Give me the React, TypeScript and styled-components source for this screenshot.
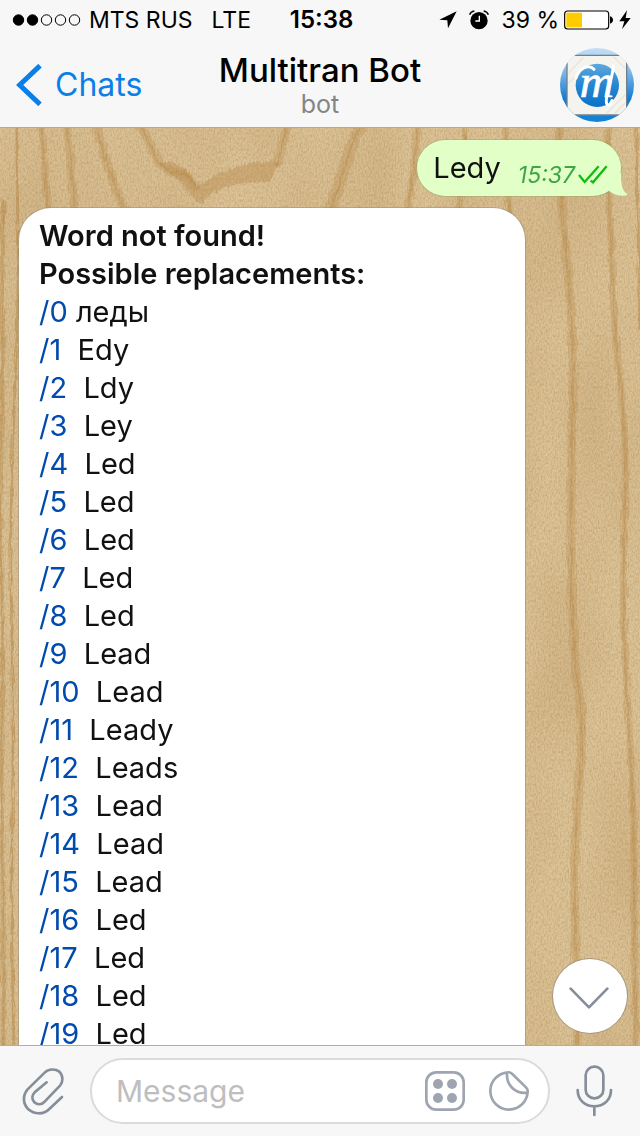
import React from "react";
import styled, { createGlobalStyle } from "styled-components";

const GlobalStyle = createGlobalStyle`
  *, *::before, *::after { box-sizing: border-box; }
  body {
    margin: 0;
    background: #f7f7f7;
    color: #111;
    font-family: Inter, "Liberation Sans", sans-serif;
  }
  button, input { font: inherit; color: inherit; }
`;

const Screen = styled.div`
  display: flex;
  flex-direction: column;
  height: 100vh;
  overflow: hidden;
`;

const Header = styled.header`
  flex: none;
  background: #f7f7f7;
  border-bottom: 1px solid #a9abad;
  color: #000;
`;

const StatusBar = styled.div`
  display: grid;
  grid-template-columns: 1fr auto 1fr;
  align-items: center;
  height: 40px;
  padding: 0 9px 0 12px;
  font-size: 23px;
  line-height: 28px;
  white-space: nowrap;
`;

const StatusGroup = styled.div<{ $end?: boolean; $gap: number }>`
  display: flex;
  align-items: center;
  justify-content: ${(p) => (p.$end ? "flex-end" : "flex-start")};
  gap: ${(p) => p.$gap}px;
`;

const Carrier = styled.span`
  margin-right: 12px;
`;

const Clock = styled.time`
  font-size: 24px;
  font-weight: 600;
`;

const NavBar = styled.div`
  display: grid;
  grid-template-columns: 1fr auto 1fr;
  align-items: center;
  height: 87px;
  padding: 2px 6px 0;
`;

const BackLink = styled.a`
  display: flex;
  align-items: center;
  gap: 12px;
  padding-left: 10px;
  color: #0b7fe8;
  font-size: 32px;
  line-height: 40px;
  text-decoration: none;
`;

const Heading = styled.div`
  text-align: center;
`;

const Title = styled.h1`
  margin: 0;
  font-size: 33px;
  line-height: 38px;
  font-weight: 500;
`;

const Subtitle = styled.p`
  margin: 0;
  color: #848486;
  font-size: 25px;
  line-height: 30px;
`;

const AvatarButton = styled.button`
  justify-self: end;
  display: block;
  padding: 0;
  border: 0;
  border-radius: 50%;
  background: none;
  svg { display: block; }
`;

const Chat = styled.main`
  position: relative;
  flex: 1;
  min-height: 0;
  overflow: hidden;
  isolation: isolate;
  display: flex;
  flex-direction: column;
  gap: 12px;
  padding: 12px 19px 0;
  background: #d5ba8b;
`;

const Wallpaper = styled.svg`
  position: absolute;
  inset: 0;
  width: 100%;
  height: 100%;
  z-index: -1;
`;

const OutgoingBubble = styled.article`
  position: relative;
  align-self: flex-end;
  flex: none;
  display: flex;
  align-items: center;
  gap: 17px;
  height: 56px;
  padding: 0 13px 0 16px;
  border-radius: 28px;
  background: #e1ffc7;
  box-shadow: 0 0 0 1px rgba(120, 160, 80, 0.3);
  font-size: 29px;
  line-height: 38px;
`;

const Tail = styled.svg`
  position: absolute;
  right: -7px;
  bottom: 0;
`;

const Meta = styled.span`
  display: flex;
  align-items: center;
  gap: 3px;
  padding-top: 13px;
  color: #3fa546;
  font-size: 23px;
  line-height: 28px;
  font-style: italic;
`;

const IncomingBubble = styled.article`
  flex: none;
  margin-right: 96px;
  padding: 9px 20px 60px;
  border-radius: 32px;
  background: #fff;
  box-shadow: 0 0 0 1px rgba(134, 130, 120, 0.4);
  font-size: 29px;
  line-height: 38px;
`;

const Notice = styled.p`
  margin: 0;
  font-weight: 600;
`;

const Suggestions = styled.ul`
  margin: 0;
  padding: 0;
  list-style: none;
`;

const Suggestion = styled.li`
  white-space: pre;
`;

const Command = styled.a`
  color: #004bad;
  text-decoration: none;
`;

const ScrollButton = styled.button`
  position: absolute;
  right: 13px;
  bottom: 12px;
  display: grid;
  place-items: center;
  width: 74px;
  height: 74px;
  padding: 3px 2px 0 0;
  border: 0;
  border-radius: 50%;
  background: #fff;
  box-shadow: 0 0 0 1px rgba(134, 130, 120, 0.6);
`;

const Composer = styled.form`
  flex: none;
  display: flex;
  align-items: center;
  gap: 26px;
  height: 91px;
  padding: 0 27px 0 22px;
  border-top: 1px solid #acaeb0;
  background: #f7f7f7;
`;

const Field = styled.div`
  flex: 1;
  min-width: 0;
  display: flex;
  align-items: center;
  gap: 24px;
  height: 66px;
  padding: 0 19px 0 24px;
  border: 2px solid #dadbdd;
  border-radius: 33px;
  background: #fff;
`;

const MessageInput = styled.input`
  flex: 1;
  min-width: 0;
  height: 44px;
  padding: 0;
  border: 0;
  outline: 0;
  background: none;
  font-size: 30px;
  &::placeholder { color: #bebec0; opacity: 1; }
`;

const IconButton = styled.button`
  flex: none;
  display: block;
  padding: 0;
  border: 0;
  background: none;
  color: #858e99;
  svg { display: block; }
`;

const strokeProps = {
  fill: "none",
  stroke: "currentColor",
  strokeWidth: 8,
  strokeLinecap: "round" as const,
  strokeLinejoin: "round" as const,
};

const SignalDots = () => (
  <svg width="70" height="14" viewBox="0 0 70 14" aria-hidden="true">
    {[7, 21, 35, 49, 63].map((cx, i) => (
      <circle key={cx} cx={cx - 0.5} cy="7" r="5.2" fill={i < 2 ? "#000" : "none"} stroke="#000" strokeWidth="1" />
    ))}
  </svg>
);

const LocationIcon = () => (
  <svg width="18" height="18" viewBox="361 36 54 54" aria-hidden="true">
    <path d="M414 37 362 62 386 64 388 88Z" />
  </svg>
);

const AlarmIcon = () => (
  <svg width="20" height="20" viewBox="451 31 60 60" aria-hidden="true">
    <circle cx="481" cy="63" r="26" />
    <path d="M453 45Q456 36 467 34M509 45Q506 36 495 34" fill="none" stroke="#000" strokeWidth="4" />
    <path d="M482 48V64H470" fill="none" stroke="#fff" strokeWidth="4" />
  </svg>
);

const BatteryIcon = () => (
  <svg width="50" height="20" viewBox="732 32 150 60" aria-hidden="true">
    <rect x="734" y="35" width="132" height="54" rx="9" fill="#fff" stroke="#000" strokeWidth="3.5" />
    <rect x="739" y="40" width="47" height="44" fill="#fc0" />
    <path d="M870 51Q879 54 879 62T870 73Z" />
  </svg>
);

const BoltIcon = () => (
  <svg width="12" height="20" viewBox="895 30 36 60" aria-hidden="true">
    <path d="M919 31 896 64H911L904 88 930 54H915Z" />
  </svg>
);

const BackIcon = () => (
  <svg width="27" height="42" viewBox="49 189 81 126" aria-hidden="true">
    <path d="M121 194 60 252 121 310" fill="none" stroke="currentColor" strokeWidth="15" />
  </svg>
);

const Avatar = () => (
  <svg width="74" height="74" viewBox="720 144 222 222" aria-hidden="true">
    <defs>
      <linearGradient id="sky" x1="0" y1="0" x2="0" y2="1">
        <stop offset="0" stopColor="#c4def5" />
        <stop offset="0.2" stopColor="#a3caec" />
        <stop offset="0.5" stopColor="#4a9add" />
        <stop offset="0.7" stopColor="#0d7bd0" />
        <stop offset="1" stopColor="#1683d6" />
      </linearGradient>
      <linearGradient id="disc" x1="0" y1="0" x2="0" y2="1">
        <stop offset="0" stopColor="#5fa8e0" />
        <stop offset="0.5" stopColor="#2586d0" />
        <stop offset="1" stopColor="#0873c8" />
      </linearGradient>
      <clipPath id="round"><circle cx="831" cy="255" r="111" /></clipPath>
    </defs>
    <g clipPath="url(#round)">
      <rect x="720" y="144" width="222" height="222" fill="url(#sky)" />
      <rect x="741" y="166" width="179" height="179" rx="10" fill="#f5f3ee" stroke="#6f8190" strokeWidth="4" />
      <path d="M745 220 790 172M745 250 765 230M860 340 915 285M885 340 915 310M880 170 916 205" stroke="#e9e4da" strokeWidth="4" />
      <circle cx="832" cy="256" r="65" fill="url(#disc)" />
      <text x="779" y="292" fontFamily="Liberation Serif, serif" fontStyle="italic" fontSize="142" fill="#fff" stroke="#fff" strokeWidth="2">m</text>
      <path d="M768 234C776 206 806 190 822 208M880 198C878 240 852 288 860 311Q868 322 876 302" fill="none" stroke="#fff" strokeWidth="9" strokeLinecap="round" />
    </g>
  </svg>
);

const ReadChecks = () => (
  <svg width="30" height="20" viewBox="535 121 90 60" fill="none" stroke="#12bd12" strokeWidth="7" aria-hidden="true">
    <path d="M538 151 555 172 597 125M573 168 580 173 621 125" />
  </svg>
);

const BubbleTail = () => (
  <Tail width="24" height="24" viewBox="0 0 24 24" aria-hidden="true">
    <path d="M17 0C17 10 17 18 24 23C15 25 9 22 4 18Z" fill="#e1ffc7" />
  </Tail>
);

const grain = [
  { d: "M17 120C16 170 20 240 17 330S8 520 12 640S8 820 14 1050", w: 3 },
  { d: "M40 120C45 150 44 180 50 220", w: 7 },
  { d: "M66 120C72 160 70 180 77 220", w: 8 },
  { d: "M94 120C104 150 109 180 131 222", w: 9 },
  { d: "M134 120C150 134 151 154 162 166S184 164 198 190", w: 9 },
  { d: "M290 120C281 137 283 154 276 166", w: 9 },
  { d: "M364 120C346 150 344 180 326 220", w: 12 },
  { d: "M418 120C417 155 412 180 406 220", w: 8 },
  { d: "M465 120C464 155 462 180 458 220", w: 5 },
  { d: "M505 120C509 155 506 180 510 220", w: 6 },
  { d: "M560 120C557 170 561 195 565 240S573 320 573 370S569 530 572 600S574 660 580 700S577 780 575 850S578 980 577 1050", w: 9 },
  { d: "M609 120C606 170 611 220 613 290S624 390 625 450S622 560 624 630S629 720 632 780S633 880 636 1050", w: 7 },
  { d: "M637 120C635 180 640 240 640 330", w: 4 },
  { d: "M4 200C0 260 5 350 1 440S5 600 2 720S6 900 3 1050", w: 5 },
];

const WoodWallpaper = () => (
  <Wallpaper viewBox="0 128 640 917" preserveAspectRatio="xMidYMin slice" aria-hidden="true">
    <defs>
      <filter id="speckle" x="0" y="0" width="100%" height="100%" colorInterpolationFilters="sRGB">
        <feTurbulence type="fractalNoise" baseFrequency="0.63 0.37" numOctaves="2" seed="4" />
        <feColorMatrix values="0 0 0 0 0.62  0 0 0 0 0.47  0 0 0 0 0.26  1.4 0 0 0 -0.5" />
      </filter>
      <filter id="clouds" x="0" y="0" width="100%" height="100%" colorInterpolationFilters="sRGB">
        <feTurbulence type="fractalNoise" baseFrequency="0.015 0.006" numOctaves="2" seed="9" />
        <feColorMatrix values="0 0 0 0 0.7  0 0 0 0 0.54  0 0 0 0 0.34  1.4 0 0 0 -0.5" />
      </filter>
      <filter id="fibre" filterUnits="userSpaceOnUse" x="0" y="110" width="640" height="950" colorInterpolationFilters="sRGB">
        <feTurbulence type="fractalNoise" baseFrequency="0.5 0.06" numOctaves="2" seed="2" result="n" />
        <feDisplacementMap in="SourceGraphic" in2="n" scale="6" xChannelSelector="R" yChannelSelector="G" />
      </filter>
    </defs>
    <rect y="128" width="640" height="917" fill="#dcc498" />
    <rect y="128" width="640" height="917" filter="url(#clouds)" opacity="0.35" />
    <g filter="url(#fibre)" fill="none" stroke="#b98a4a">
      {grain.map((g) => (
        <React.Fragment key={g.d}>
          <path d={g.d} strokeWidth={g.w} opacity="0.3" />
          <path d={g.d} strokeWidth="2" opacity="0.4" />
        </React.Fragment>
      ))}
      <path d="M158 163C180 160 188 170 198 187C218 170 250 160 280 162L270 182C240 182 215 185 202 204C190 200 185 180 158 163Z" fill="#b98a4a" stroke="none" opacity="0.4" />
    </g>
    <rect y="128" width="640" height="917" filter="url(#speckle)" opacity="0.5" />
  </Wallpaper>
);

const words = [
  "леды", "Edy", "Ldy", "Ley", "Led", "Led", "Led", "Led", "Led", "Lead",
  "Lead", "Leady", "Leads", "Lead", "Lead", "Lead", "Led", "Led", "Led", "Led",
];

export default function App() {
  return (
    <Screen>
      <GlobalStyle />
      <Header>
        <StatusBar>
          <StatusGroup $gap={7}>
            <SignalDots />
            <Carrier>MTS RUS</Carrier>
            <span>LTE</span>
          </StatusGroup>
          <Clock>15:38</Clock>
          <StatusGroup $gap={5} $end>
            <StatusGroup $gap={12}>
              <LocationIcon />
              <AlarmIcon />
              <span>39 %</span>
            </StatusGroup>
            <BatteryIcon />
            <BoltIcon />
          </StatusGroup>
        </StatusBar>
        <NavBar>
          <BackLink href="#chats">
            <BackIcon />
            Chats
          </BackLink>
          <Heading>
            <Title>Multitran Bot</Title>
            <Subtitle>bot</Subtitle>
          </Heading>
          <AvatarButton type="button" aria-label="Bot profile">
            <Avatar />
          </AvatarButton>
        </NavBar>
      </Header>

      <Chat>
        <WoodWallpaper />
        <OutgoingBubble>
          <BubbleTail />
          <span>Ledy</span>
          <Meta>
            <time>15:37</time>
            <ReadChecks />
          </Meta>
        </OutgoingBubble>
        <IncomingBubble>
          <Notice>Word not found!</Notice>
          <Notice>Possible replacements:</Notice>
          <Suggestions>
            {words.map((word, i) => (
              <Suggestion key={i}>
                <Command href={`#${i}`}>/{i}</Command>
                {i === 0 ? " " : "  "}
                {word}
              </Suggestion>
            ))}
          </Suggestions>
        </IncomingBubble>
        <ScrollButton type="button" aria-label="Scroll to bottom">
          <svg width="40" height="22" viewBox="507 144 120 66" color="#858e99" aria-hidden="true">
            <path d="M512 149 567 205 622 149" {...strokeProps} />
          </svg>
        </ScrollButton>
      </Chat>

      <Composer>
        <IconButton type="button" aria-label="Attach">
          <svg width="42" height="49" viewBox="66 110 126 147" aria-hidden="true">
            <path
              d="M186 200 148 236C130 254 102 252 85 237C68 220 68 196 82 178L134 127C146 115 166 115 178 124C190 136 190 154 180 166L134 214C126 224 112 224 103 216C94 206 96 194 104 186L140 156"
              {...strokeProps}
            />
          </svg>
        </IconButton>
        <Field>
          <MessageInput aria-label="Message" placeholder="Message" />
          <IconButton type="button" aria-label="Bot keyboard">
            <svg width="40" height="40" viewBox="75 393 120 120" color="#9ea4b0" aria-hidden="true">
              <rect x="79" y="397" width="112" height="112" rx="30" {...strokeProps} />
              {[[114, 432], [156, 432], [114, 474], [156, 474]].map(([x, y]) => (
                <circle key={`${x}-${y}`} cx={x} cy={y} r="15" fill="currentColor" />
              ))}
            </svg>
          </IconButton>
          <IconButton type="button" aria-label="Stickers">
            <svg width="40" height="40" viewBox="267 393 120 120" color="#9ea4b0" aria-hidden="true">
              <path d="M323 397Q331 396 337 402L378 442Q384 448 383 456A56 56 0 1 1 323 397ZM321 398C318 436 346 462 382 458" {...strokeProps} />
            </svg>
          </IconButton>
        </Field>
        <IconButton type="button" aria-label="Record voice message">
          <svg width="37" height="52" viewBox="527 379 111 156" aria-hidden="true">
            <rect x="556" y="384" width="53" height="95" rx="26" {...strokeProps} />
            <path d="M532 454C532 485 555 503 582 503S632 485 632 454M582 503V529" {...strokeProps} />
          </svg>
        </IconButton>
      </Composer>
    </Screen>
  );
}
